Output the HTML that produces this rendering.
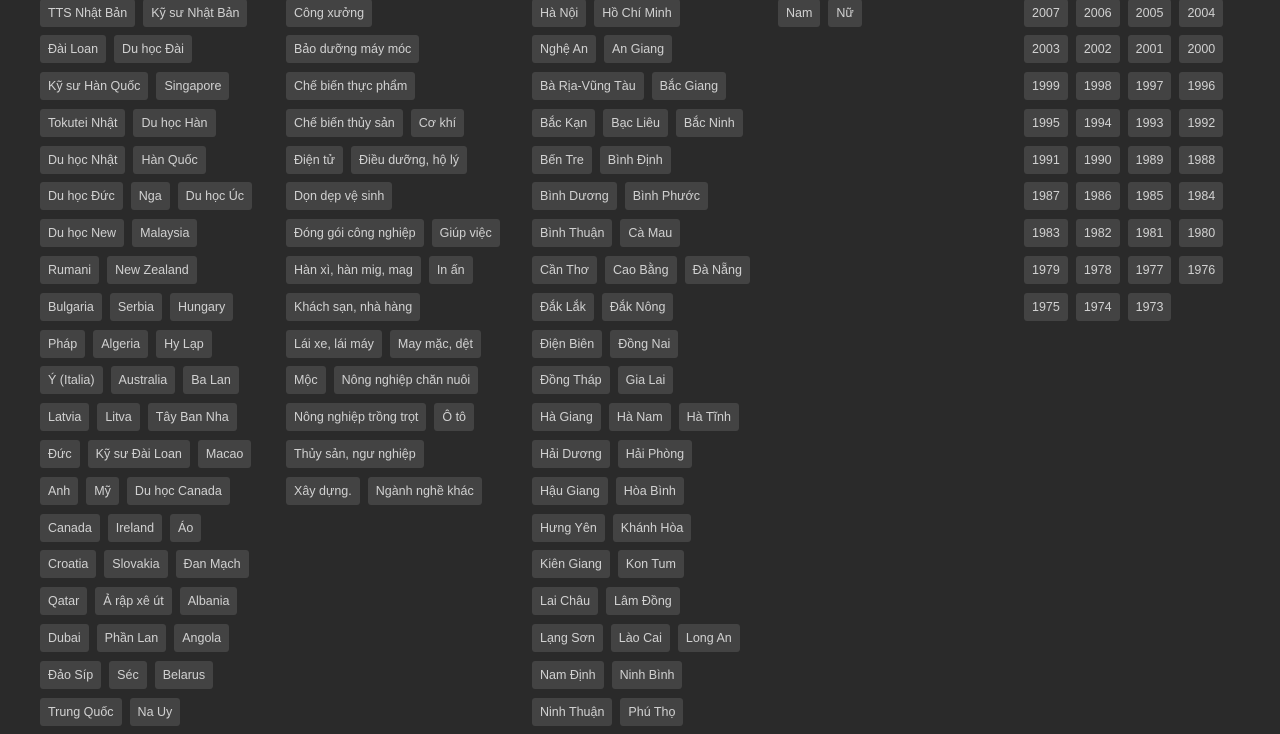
<!DOCTYPE html>
<html><head><meta charset="utf-8"><style>
body{margin:0;background:#2a2a2a;width:1280px;height:720px;overflow:hidden;font-family:"Liberation Sans",sans-serif;font-size:12.5px;color:#d0d0d0}
.c{position:absolute;top:-1.5px;width:246px}
.r{display:flex;gap:8px;height:28px;margin-bottom:8.8px}
.r span{background:#434343;border-radius:3px;padding:0 8px;line-height:28px;white-space:nowrap}
</style></head><body>
<div class="c" style="left:40px">
<div class="r"><span>TTS Nhật Bản</span><span>Kỹ sư Nhật Bản</span></div>
<div class="r"><span>Đài Loan</span><span>Du học Đài</span></div>
<div class="r"><span>Kỹ sư Hàn Quốc</span><span>Singapore</span></div>
<div class="r"><span>Tokutei Nhật</span><span>Du học Hàn</span></div>
<div class="r"><span>Du học Nhật</span><span>Hàn Quốc</span></div>
<div class="r"><span>Du học Đức</span><span>Nga</span><span>Du học Úc</span></div>
<div class="r"><span>Du học New</span><span>Malaysia</span></div>
<div class="r"><span>Rumani</span><span>New Zealand</span></div>
<div class="r"><span>Bulgaria</span><span>Serbia</span><span>Hungary</span></div>
<div class="r"><span>Pháp</span><span>Algeria</span><span>Hy Lạp</span></div>
<div class="r"><span>Ý (Italia)</span><span>Australia</span><span>Ba Lan</span></div>
<div class="r"><span>Latvia</span><span>Litva</span><span>Tây Ban Nha</span></div>
<div class="r"><span>Đức</span><span>Kỹ sư Đài Loan</span><span>Macao</span></div>
<div class="r"><span>Anh</span><span>Mỹ</span><span>Du học Canada</span></div>
<div class="r"><span>Canada</span><span>Ireland</span><span>Áo</span></div>
<div class="r"><span>Croatia</span><span>Slovakia</span><span>Đan Mạch</span></div>
<div class="r"><span>Qatar</span><span>Ả rập xê út</span><span>Albania</span></div>
<div class="r"><span>Dubai</span><span>Phần Lan</span><span>Angola</span></div>
<div class="r"><span>Đảo Síp</span><span>Séc</span><span>Belarus</span></div>
<div class="r"><span>Trung Quốc</span><span>Na Uy</span></div>
</div>
<div class="c" style="left:286px">
<div class="r"><span>Công xưởng</span></div>
<div class="r"><span>Bảo dưỡng máy móc</span></div>
<div class="r"><span>Chế biến thực phẩm</span></div>
<div class="r"><span>Chế biến thủy sản</span><span>Cơ khí</span></div>
<div class="r"><span>Điện tử</span><span>Điều dưỡng, hộ lý</span></div>
<div class="r"><span>Dọn dẹp vệ sinh</span></div>
<div class="r"><span>Đóng gói công nghiệp</span><span>Giúp việc</span></div>
<div class="r"><span>Hàn xì, hàn mig, mag</span><span>In ấn</span></div>
<div class="r"><span>Khách sạn, nhà hàng</span></div>
<div class="r"><span>Lái xe, lái máy</span><span>May mặc, dệt</span></div>
<div class="r"><span>Mộc</span><span>Nông nghiệp chăn nuôi</span></div>
<div class="r"><span>Nông nghiệp trồng trọt</span><span>Ô tô</span></div>
<div class="r"><span>Thủy sản, ngư nghiệp</span></div>
<div class="r"><span>Xây dựng.</span><span>Ngành nghề khác</span></div>
</div>
<div class="c" style="left:532px">
<div class="r"><span>Hà Nội</span><span>Hồ Chí Minh</span></div>
<div class="r"><span>Nghệ An</span><span>An Giang</span></div>
<div class="r"><span>Bà Rịa-Vũng Tàu</span><span>Bắc Giang</span></div>
<div class="r"><span>Bắc Kạn</span><span>Bạc Liêu</span><span>Bắc Ninh</span></div>
<div class="r"><span>Bến Tre</span><span>Bình Định</span></div>
<div class="r"><span>Bình Dương</span><span>Bình Phước</span></div>
<div class="r"><span>Bình Thuận</span><span>Cà Mau</span></div>
<div class="r"><span>Cần Thơ</span><span>Cao Bằng</span><span>Đà Nẵng</span></div>
<div class="r"><span>Đắk Lắk</span><span>Đắk Nông</span></div>
<div class="r"><span>Điện Biên</span><span>Đồng Nai</span></div>
<div class="r"><span>Đồng Tháp</span><span>Gia Lai</span></div>
<div class="r"><span>Hà Giang</span><span>Hà Nam</span><span>Hà Tĩnh</span></div>
<div class="r"><span>Hải Dương</span><span>Hải Phòng</span></div>
<div class="r"><span>Hậu Giang</span><span>Hòa Bình</span></div>
<div class="r"><span>Hưng Yên</span><span>Khánh Hòa</span></div>
<div class="r"><span>Kiên Giang</span><span>Kon Tum</span></div>
<div class="r"><span>Lai Châu</span><span>Lâm Đồng</span></div>
<div class="r"><span>Lạng Sơn</span><span>Lào Cai</span><span>Long An</span></div>
<div class="r"><span>Nam Định</span><span>Ninh Bình</span></div>
<div class="r"><span>Ninh Thuận</span><span>Phú Thọ</span></div>
</div>
<div class="c" style="left:778px">
<div class="r"><span>Nam</span><span>Nữ</span></div>
</div>
<div class="c" style="left:1024px">
<div class="r"><span>2007</span><span>2006</span><span>2005</span><span>2004</span></div>
<div class="r"><span>2003</span><span>2002</span><span>2001</span><span>2000</span></div>
<div class="r"><span>1999</span><span>1998</span><span>1997</span><span>1996</span></div>
<div class="r"><span>1995</span><span>1994</span><span>1993</span><span>1992</span></div>
<div class="r"><span>1991</span><span>1990</span><span>1989</span><span>1988</span></div>
<div class="r"><span>1987</span><span>1986</span><span>1985</span><span>1984</span></div>
<div class="r"><span>1983</span><span>1982</span><span>1981</span><span>1980</span></div>
<div class="r"><span>1979</span><span>1978</span><span>1977</span><span>1976</span></div>
<div class="r"><span>1975</span><span>1974</span><span>1973</span></div>
</div>
</body></html>
